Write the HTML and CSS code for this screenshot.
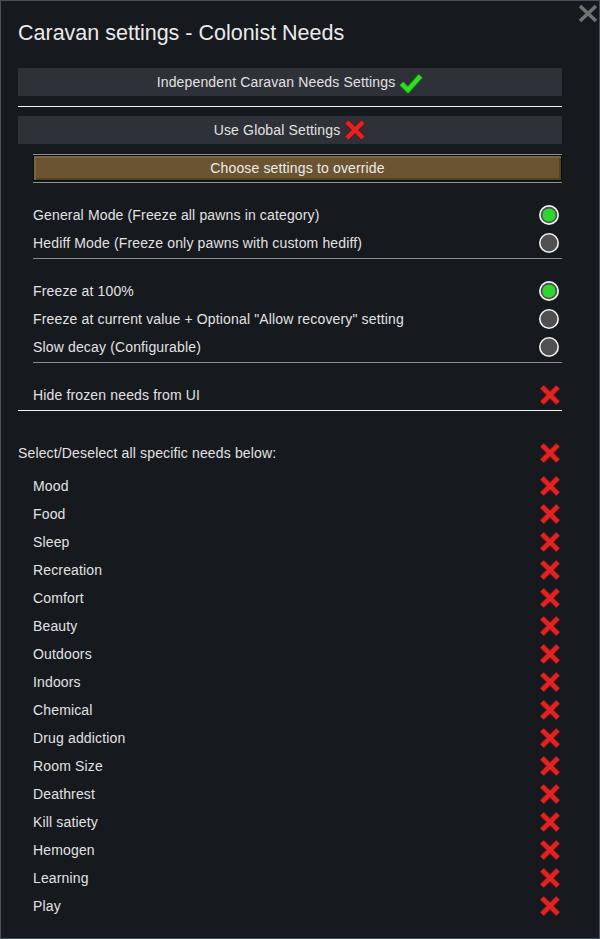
FILE: index.html
```html
<!DOCTYPE html>
<html lang="en">
<head>
    <meta charset="UTF-8">
    <title>Caravan settings - Colonist Needs</title>
    <link rel="stylesheet" href="styles.css">
</head>
<body>
    <svg class="defs" aria-hidden="true">
        <symbol id="icon-cross" viewBox="0 0 22 22">
            <path d="M3 3 L19 19 M19 3 L3 19" stroke="#6e1010" stroke-width="6.5" fill="none"/>
            <path d="M3 3 L19 19 M19 3 L3 19" stroke="#e02424" stroke-width="4.5" fill="none"/>
        </symbol>
        <symbol id="icon-check" viewBox="0 0 24 20">
            <path d="M2.5 10.5 L9 17 L21.5 3" stroke="#15700f" stroke-width="6.5" fill="none"/>
            <path d="M2.5 10.5 L9 17 L21.5 3" stroke="#31dc26" stroke-width="4.5" fill="none"/>
        </symbol>
        <symbol id="icon-radio-on" viewBox="0 0 20 20">
            <circle cx="10" cy="10" r="10" fill="#f2f2f2"/>
            <circle cx="10" cy="10" r="8.3" fill="#4e4e4e"/>
            <circle cx="10" cy="10" r="6.6" fill="#2ed52e"/>
        </symbol>
        <symbol id="icon-radio-off" viewBox="0 0 20 20">
            <circle cx="10" cy="10" r="10" fill="#f2f2f2"/>
            <circle cx="10" cy="10" r="8.4" fill="#505050"/>
        </symbol>
    </svg>

    <div class="window">
        <button class="close" title="Close">
            <svg viewBox="0 0 20 19" width="20" height="19">
                <path d="M2 2 L18 17 M18 2 L2 17" stroke="#707274" stroke-width="3.6" fill="none"/>
            </svg>
        </button>

        <h1 class="title">Caravan settings - Colonist Needs</h1>

        <div class="toggle-bar">
            <span>Independent Caravan Needs Settings</span>
            <svg class="check"><use href="#icon-check"/></svg>
        </div>
        <div class="line-white"></div>
        <div class="toggle-bar">
            <span>Use Global Settings</span>
            <svg class="cross"><use href="#icon-cross"/></svg>
        </div>

        <div class="override">
            <div class="line-gray first"></div>
            <div class="override-btn">Choose settings to override</div>
            <div class="line-gray"></div>

            <div class="group">
                <div class="row">
                    <span>General Mode (Freeze all pawns in category)</span>
                    <svg class="radio"><use href="#icon-radio-on"/></svg>
                </div>
                <div class="row">
                    <span>Hediff Mode (Freeze only pawns with custom hediff)</span>
                    <svg class="radio"><use href="#icon-radio-off"/></svg>
                </div>
            </div>
            <div class="line-gray"></div>

            <div class="group">
                <div class="row">
                    <span>Freeze at 100%</span>
                    <svg class="radio"><use href="#icon-radio-on"/></svg>
                </div>
                <div class="row">
                    <span>Freeze at current value + Optional "Allow recovery" setting</span>
                    <svg class="radio"><use href="#icon-radio-off"/></svg>
                </div>
                <div class="row">
                    <span>Slow decay (Configurable)</span>
                    <svg class="radio"><use href="#icon-radio-off"/></svg>
                </div>
            </div>
            <div class="line-gray"></div>

            <div class="group">
                <div class="row">
                    <span>Hide frozen needs from UI</span>
                    <svg class="cross"><use href="#icon-cross"/></svg>
                </div>
            </div>
        </div>
        <div class="line-white tight"></div>

        <div class="row select-all">
            <span>Select/Deselect all specific needs below:</span>
            <svg class="cross"><use href="#icon-cross"/></svg>
        </div>

        <div class="needs" id="needs"></div>
    </div>

    <script>
        const needs = ['Mood', 'Food', 'Sleep', 'Recreation', 'Comfort', 'Beauty', 'Outdoors',
            'Indoors', 'Chemical', 'Drug addiction', 'Room Size', 'Deathrest', 'Kill satiety',
            'Hemogen', 'Learning', 'Play'];

        const list = document.getElementById('needs');
        needs.forEach(name => {
            const row = document.createElement('div');
            row.className = 'row';
            row.innerHTML = `<span>${name}</span><svg class="cross"><use href="#icon-cross"/></svg>`;
            list.appendChild(row);
        });
    </script>
</body>
</html>
```

FILE: styles.css
```css
* {
    box-sizing: border-box;
}
body {
    margin: 0;
    background: #16191e;
    font-family: "Liberation Sans", Arial, sans-serif;
    font-size: 14px;
    letter-spacing: 0.15px;
    color: #e2e2e2;
}
.defs {
    position: absolute;
    width: 0;
    height: 0;
    overflow: hidden;
}
.window {
    position: relative;
    width: 600px;
    height: 939px;
    border: 1px solid #4a505b;
    background: #16191e;
    padding: 0 37px 0 17px;
}
.close {
    position: absolute;
    top: 3px;
    right: 1px;
    background: none;
    border: none;
    padding: 0;
    width: 20px;
    height: 19px;
    cursor: pointer;
}
.title {
    margin: 17px 0 20px;
    height: 30px;
    line-height: 30px;
    font-size: 21.5px;
    font-weight: normal;
    letter-spacing: 0;
    color: #eaeaea;
}
.toggle-bar {
    height: 28px;
    background: #2e3137;
    display: flex;
    align-items: center;
    justify-content: center;
    gap: 4px;
}
.toggle-bar .check {
    width: 24px;
    height: 20px;
    margin-top: 1px;
}
.toggle-bar .cross {
    width: 22px;
    height: 22px;
}
.line-white {
    height: 1px;
    background: #f4f4f4;
    margin: 10px 0 9px;
}
.line-white.tight {
    margin: 1px 0 0;
}
.override {
    margin-left: 15px;
}
.line-gray {
    height: 1px;
    background: #8a8d92;
    margin-top: 1px;
}
.line-gray.first {
    margin-top: 10px;
}
.override-btn {
    height: 26px;
    border: 1px solid #0c0c0c;
    background: #6b5432;
    box-shadow: inset 2px 2px 0 #7b6240, inset -2px -2px 0 #54411f;
    display: flex;
    align-items: center;
    justify-content: center;
    color: #ececec;
}
.group {
    margin-top: 18px;
}
.row {
    height: 28px;
    display: flex;
    align-items: center;
    justify-content: space-between;
    padding-right: 1px;
}
.row .radio {
    width: 20px;
    height: 20px;
    margin-right: 2px;
}
.row .cross {
    width: 22px;
    height: 22px;
}
.select-all {
    margin-top: 28px;
}
.needs {
    margin-top: 5px;
    padding-left: 15px;
}
```
